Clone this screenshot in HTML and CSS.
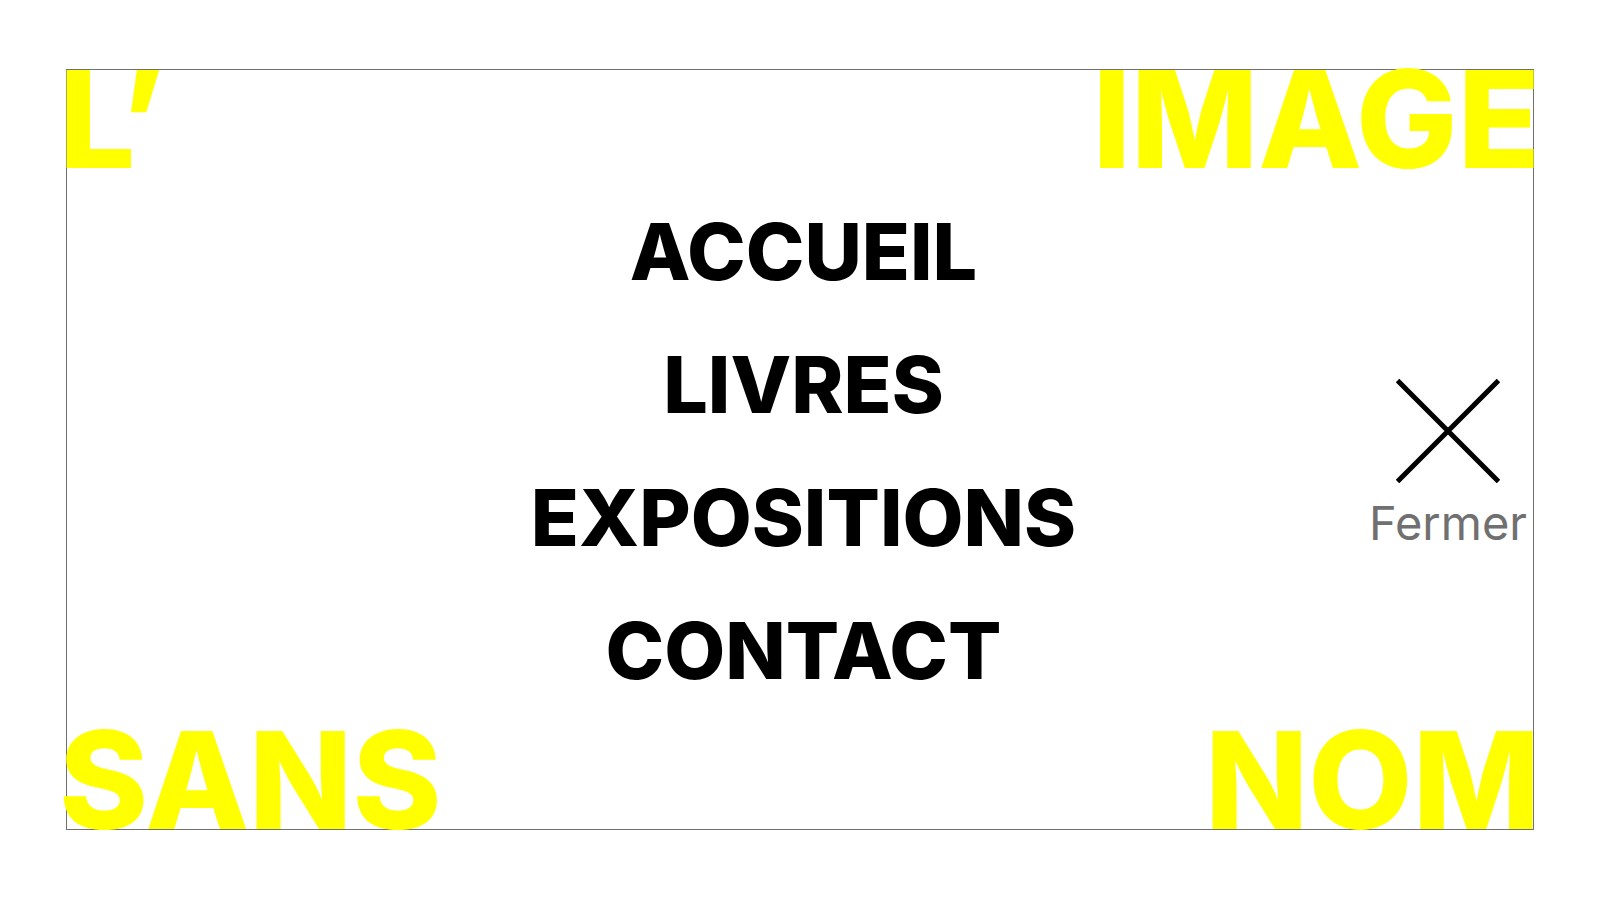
FILE: index.html
```html
<!DOCTYPE html>
<html lang="fr">
<head>
  <meta charset="utf-8">
  <meta name="viewport" content="width=device-width, initial-scale=1">
  <title>L’image sans nom</title>
  <link rel="stylesheet" href="styles.css">
</head>
<body>
  <div class="frame">
    <header class="words">
      <span class="word">L’</span>
      <span class="word">IMAGE</span>
    </header>
    <main class="content">
      <nav class="menu" aria-label="Menu principal">
        <a class="menu-link" href="#accueil">ACCUEIL</a>
        <a class="menu-link" href="#livres">LIVRES</a>
        <a class="menu-link" href="#expositions">EXPOSITIONS</a>
        <a class="menu-link" href="#contact">CONTACT</a>
      </nav>
      <button class="close" type="button">
        <svg class="close-icon" viewBox="0 0 104 104" aria-hidden="true">
          <path d="M1.5 1.5L102.5 102.5M102.5 1.5L1.5 102.5" fill="none" stroke="#000" stroke-width="5"/>
        </svg>
        <span>Fermer</span>
      </button>
    </main>
    <footer class="words">
      <span class="word">SANS</span>
      <span class="word">NOM</span>
    </footer>
  </div>
</body>
</html>
```
FILE: styles.css
```css
* {
  box-sizing: border-box;
}

body {
  margin: 0;
  padding: 69px 66px 70px;
  min-height: 100vh;
  display: flex;
  background: #fff;
  color: #000;
  font-family: Inter, "Liberation Sans", sans-serif;
}

.frame {
  flex: 1;
  display: flex;
  flex-direction: column;
  border: 1px solid #707070;
}

.words {
  display: flex;
  justify-content: space-between;
  margin: 0 -7px 0 -8px;
}

.word {
  color: #ff0;
  font-size: 135px;
  font-weight: 800;
  line-height: 98px;
}

.content {
  flex: 1;
  display: grid;
  grid-template-columns: 1fr auto 1fr;
  align-items: center;
  padding: 3px 6px 0 13px;
}

.menu {
  grid-column: 2;
  display: flex;
  flex-direction: column;
  align-items: center;
}

.menu-link {
  color: #000;
  font-size: 79px;
  font-weight: 800;
  line-height: 133px;
  text-decoration: none;
}

.close {
  justify-self: end;
  display: flex;
  flex-direction: column;
  align-items: center;
  gap: 16px;
  margin: 0;
  padding: 24px 0 0;
  border: 0;
  background: none;
  color: #707070;
  font: 400 47px/48px Inter, "Liberation Sans", sans-serif;
  cursor: pointer;
}

.close-icon {
  width: 104px;
  height: 104px;
}
```
